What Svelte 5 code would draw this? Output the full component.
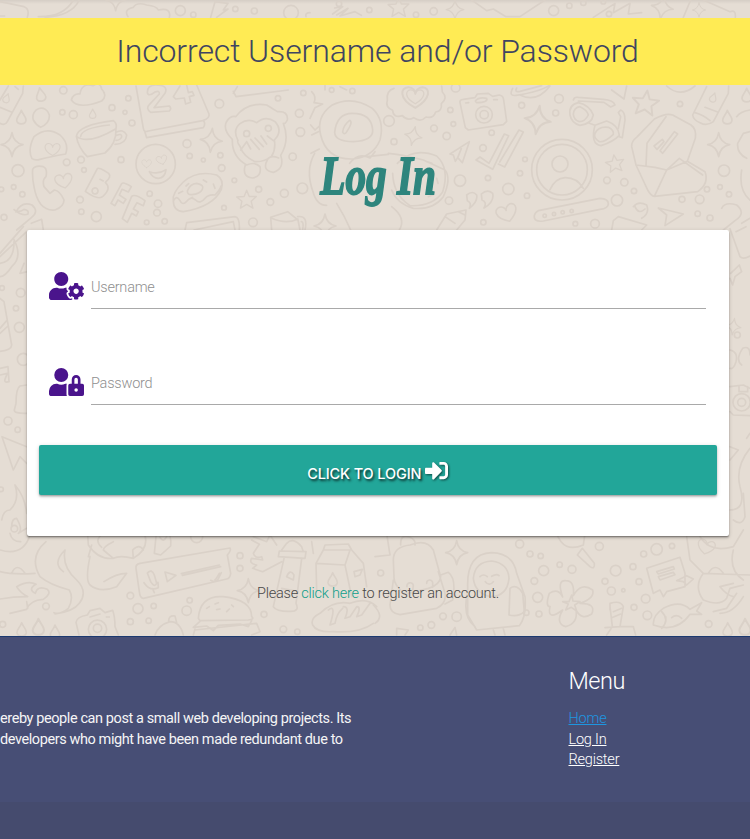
<script>
  const menu = ['Home', 'Log In', 'Register'];
  const star4 = 'M0-36Q5-5 33 0Q5 5 0 36Q-5 5-33 0Q-5-5 0-36Z';
  const star5 = 'M0-32L9-10L34-10L16 7L22 31L0 18L-22 31L-17 7L-35-8L-9-10Z';
  const heart = 'M0 24C-45 0-36-28-17-28C-6-28 0-18 0-12C0-18 8-28 18-28C38-26 40 0 0 24Z';
  const drop = 'M0-20C-4-6-15 0-14 10C-12 24 12 24 14 10C15 0 4-8 0-20Z';
  const envelope = 'M2142 440Q2140 425 2159 410L2210 357Q2245 338 2265 345L2320 375Q2337 387 2333 415L2309 484L2362 515Q2375 550 2340 575L2210 589Q2200 588 2190 570L2155 495ZM2155 495L2212 502L2247 510M2309 484L2247 510M2185 497L2188 430L2245 350M2210 589L2247 510L2285 475L2355 525M2209 438L2234 418L2239 425L2218 448ZM2227 452L2270 395L2280 402L2235 460Z';

  // Small rings scattered between the doodles: x, y, radius
  const rings = [
    [541,32,15],[580,44,8],[706,27,8],[763,33,9],[873,38,22],[1017,11,8],[1108,30,8],
    [190,271,11],[187,337,8],[220,344,12],[336,323,9],[385,295,8],[375,337,6],[396,369,9],[658,311,13],
    [561,431,12],[569,468,8],[610,480,6],[661,466,8],[665,504,10],[878,470,11],[898,340,12],[834,295,8],[901,396,13],[910,279,8],
    [995,270,7],[1057,273,8],[54,512,18],[200,487,10],[243,479,10],[252,510,7],[363,479,9],[4,568,7],[41,561,7],[67,583,8],
    [240,599,10],[244,635,8],[289,650,15],[449,581,8],[474,611,11],[471,638,10],[440,667,7],[494,664,8],[703,541,7],[776,568,9],
    [853,580,12],[907,565,16],[811,606,10],[672,623,7],[759,667,13],[12,652,9],
    [1301,34,11],[1248,44,8],[1661,32,15],[1708,17,8],[1750,8,8],[1810,5,7],[1827,42,8],[1367,263,13],[1677,296,13],[1565,316,9],
    [1667,339,9],[1351,330,8],[1167,363,16],[1302,385,10],[1340,408,11],[1360,372,7],[1475,398,8],[1449,444,10],[1182,425,9],
    [1575,478,7],[1560,520,8],[1464,534,8],[1380,542,17],[1525,567,17],[1581,587,8],[1347,602,11],[1450,667,8],[1821,541,10],
    [1873,547,11],[1851,601,17],[1902,573,8],[2040,312,8],[2172,512,17],[2121,568,8],[2099,598,13],[2046,598,9],[2160,561,7],
    [2187,583,8],[2093,641,8],[2130,654,9],[1785,671,13],[1726,671,7],
    [720,1667,9],[720,1705,9],[391,1787,10],[414,1826,15],[461,1818,8],[391,1865,9],[446,1862,8],[569,1801,8],[560,1832,14],
    [792,1843,9],[850,1888,10],[892,1895,8],[138,1819,10],[8,1873,9],[590,1610,18],[1559,1632,12],[1590,1662,9],[1622,1668,8],
    [1142,1719,9],[1631,1712,15],[1679,1694,8],[1716,1708,12],[1603,1743,10],[1613,1792,15],[1617,1842,9],[1579,1838,8],
    [1798,1639,12],[1847,1712,16],[1815,1744,9],[1899,1700,9],[1931,1662,9],[1970,1648,17],[2016,1638,8],[1917,1745,9],
    [1834,1773,12],[1870,1771,5],[1937,1796,13],[1902,1822,9],[1942,1846,13],[1329,1849,10],[1370,1850,14],[1294,1875,10],
    [1261,1883,8],[2126,1872,10],[6,864,7],[62,878,13],[48,925,8],[58,982,15],[70,1078,18],[24,1263,12],[53,1289,8],[3,1468,7],[43,1586,10],
    [2212,1005,9],[2225,1207,26],[2225,1207,12]
  ];

  // Repeated motifs: shape, transform
  const stamps = [
    [star4,'translate(347 0) scale(.9)'],[star4,'translate(36 434)'],[star4,'translate(634 421) rotate(5)'],[star4,'translate(975 678)'],
    [star4,'translate(1365 29) scale(.8)'],[star4,'translate(1240 408) scale(.8) rotate(12)'],[star4,'translate(1613 360) scale(1.2) rotate(8)'],
    [star4,'translate(1987 22) rotate(10)'],[star4,'translate(2097 30) scale(.6)'],[star4,'translate(2156 434)'],[star4,'translate(745 1772)'],
    [star4,'translate(1370 1658)'],[star4,'translate(2200 980) scale(.7) rotate(8)'],
    [star5,'translate(740 598) scale(.85)'],[star5,'translate(1196 21) scale(.9)'],[star5,'translate(1937 308) scale(1.15) rotate(8)'],[star5,'translate(1845 490) scale(.8) rotate(-8)'],
    [heart,'translate(192 545) scale(.8) rotate(-10)'],[heart,'translate(1246 295) scale(1.2)'],[heart,'translate(1246 292) scale(.8)'],[heart,'translate(1522 642) scale(.95) rotate(-18)'],[heart,'translate(2118 1643) scale(.8) rotate(15)'],
    [heart,'translate(158 450) scale(.7)'],[heart,'translate(440 492) scale(.45)'],[heart,'translate(486 481) scale(.5) rotate(-15)'],
    [drop,'translate(122 283) rotate(-10)'],[drop,'translate(64 351)'],[drop,'translate(278 341) scale(.7)'],[drop,'translate(20 294) scale(.7) rotate(20)'],
    [drop,'translate(2182 351)'],[drop,'translate(2140 292) scale(.7) rotate(20)'],[drop,'translate(2240 285)'],[drop,'translate(998 1738)'],
    [drop,'translate(65 1888)'],[drop,'translate(115 1880) scale(1.2)'],[drop,'translate(165 1895)'],[drop,'translate(2183 1888)'],[drop,'translate(2235 1880) scale(1.2)'],
    [envelope,'translate(-247 0)']
  ];

  const doodles = [
    // top strip: card, banana, cloud, bolt, scribble
    'M0 5L72 20Q90 27 82 52M0 48H14M115 50Q190 52 220 0M135 52Q215 48 238 0M384 50Q370 28 400 22Q410 5 440 15Q470 18 475 30Q515 22 508 52M632 52L645 5L684 10L670 30L684 27L650 52M998 42L1028 20L1004 24M1010 45L1044 25L1020 48L1065 35Q1075 42 1084 46M918 50Q915 38 930 38',
    'M1415 0L1460 32L1480 27L1518 50H1560L1635 0M1780 52L1845 10L1840 38L1890 10L1885 42L1925 38M2050 52L2072 0M2110 0L2190 35Q2208 28 2206 52',
    // calendar with its figures
    'M408 258L430 385Q432 398 445 393L608 362Q630 355 627 342L590 255M434 394L440 413L610 383Q618 370 610 362M442 277Q442 255 467 255Q507 255 495 280L462 323L508 318Q516 325 508 333L452 337Q436 325 448 314L478 282Q479 270 465 276Q444 292 442 277ZM540 258L520 290L527 297L553 294L557 312L572 307L568 290L582 286L577 275L565 278L560 255',
    // glue tube, helmet, phone
    'M25 258L0 300M70 258L68 280L22 365Q15 378 0 370M0 322L34 336M45 260L55 268M148 332M148 345A25 27 0 1 0 100 360Q108 375 122 382Q150 370 148 345M96 476Q82 450 102 410Q140 378 180 405Q208 430 197 462Q150 470 120 478Q105 482 96 476M98 508Q105 495 130 500Q143 505 138 530Q126 540 132 560L150 580L163 570Q180 572 192 600Q192 620 165 630Q115 635 102 560Q96 530 98 508Z',
    // cloud and cup
    'M214 300Q220 280 240 282Q245 247 279 257Q300 244 305 267Q324 287 305 303Q235 330 214 300ZM229 409Q235 375 340 362Q352 370 348 386Q350 430 315 459L262 470Q235 443 229 409ZM229 409Q265 435 348 386M242 409Q245 384 328 375M348 397Q370 385 380 405Q378 432 345 433M350 406Q366 399 365 411Q360 421 348 421',
    // smiley, donut, letters and number at the left
    'M408 492A59 59 0 1 0 526 492A59 59 0 1 0 408 492M448 515Q475 525 498 509Q495 534 475 535Q458 535 448 515M520 602Q515 580 550 546Q590 510 650 525Q673 539 664 568Q640 620 550 635Q520 633 520 602M522 600Q530 585 540 602Q547 618 560 604Q572 588 587 600Q600 614 616 594Q626 582 645 585Q660 570 663 558M562 573Q570 551 590 550Q614 555 607 568Q600 582 575 584Q562 585 562 573M536 580L548 574M558 558L566 551M610 540L620 546M640 552L645 565M569 596L578 592',
    'M292 506Q295 500 326 520Q336 530 316 547Q335 565 310 588Q296 603 256 574ZM291 566A9 9 0 1 0 292 567M300 538L310 543M333 610L365 551Q370 545 394 560L385 576L366 568L358 585L378 598L370 610L354 600L345 617ZM367 656L395 589Q405 580 435 602L430 617L411 608L400 627L415 635L409 648L395 640L382 667ZM48 636Q65 602 96 615Q118 634 95 652L50 690M42 629Q68 650 84 642Q88 630 72 628Q55 640 42 629M94 670L125 658L130 690',
    // monkey
    'M697 418Q668 390 679 366Q691 346 707 350Q742 305 800 315Q825 330 832 335Q865 332 862 360Q855 374 850 370Q870 420 842 466Q855 506 820 517Q785 512 802 480Q810 464 836 474M736 495Q725 530 757 534Q786 530 780 500Q765 484 740 495Q695 470 697 418M714 422Q697 390 720 371Q745 353 770 368Q797 345 825 365Q850 392 823 420Q828 448 815 468Q795 486 765 485Q730 470 720 439Q710 425 714 422M740 425L722 450M740 425L752 447M752 418L778 448M765 414L790 440M783 408L800 432M802 408L820 422M731 401A9 9 0 1 0 749 401A9 9 0 1 0 731 401M796 385A9 9 0 1 0 814 385A9 9 0 1 0 796 385',
    // astronaut
    'M962 405Q948 350 995 316Q1055 285 1117 325Q1155 360 1140 420Q1120 470 1060 477Q980 480 962 405ZM1004 397Q1010 340 1057 340Q1115 340 1118 390Q1120 422 1060 425Q1005 425 1004 397M1028 396Q1030 375 1049 361Q1060 366 1041 394Q1033 407 1028 396M935 275Q950 290 942 308L968 312L945 323L930 355M932 375L945 390L957 379M935 405L955 395M933 460L958 447M944 460Q915 510 939 575Q950 616 980 616M1049 490Q1075 455 1110 474L1125 455M1010 610Q1035 650 1052 690M1100 470L1165 463',
    'M1165 460Q1200 462 1270 480L1335 510Q1355 535 1330 590Q1300 630 1240 625Q1190 610 1175 570M1192 490Q1240 440 1310 468Q1350 505 1328 576Q1298 620 1230 617Q1180 585 1178 520M1220 480L1238 474M1280 485L1296 490M1310 535L1314 550M1285 590L1300 584M1175 620Q1220 655 1198 690',
    // badge, camera
    'M1182 265Q1158 272 1162 301Q1155 322 1178 331Q1180 355 1207 347Q1222 364 1241 353Q1262 368 1278 351Q1300 357 1307 336Q1327 334 1324 311Q1345 294 1327 276L1325 258M1380 308Q1378 299 1390 298L1425 293L1432 282L1465 280L1478 289L1498 285Q1510 287 1511 300L1520 364L1510 374L1405 390L1396 383ZM1427 344A25 25 0 1 0 1477 344A25 25 0 1 0 1427 344M1440 344A12 12 0 1 0 1465 344A12 12 0 1 0 1440 344M1426 303Q1436 290 1460 295Q1465 307 1430 308ZM1397 309L1406 308M1481 299H1492',
    // planet, sunglasses
    'M1538 265Q1525 290 1548 286Q1620 275 1648 256M1550 264Q1542 278 1560 274L1625 257M1560 285Q1610 310 1650 258M1720 300Q1722 290 1735 292L1810 298Q1840 300 1845 315L1832 321L1812 307L1735 303M1710 345Q1705 315 1735 308Q1768 315 1780 345Q1775 372 1740 376Q1715 370 1710 345M1720 343Q1722 322 1740 320Q1762 330 1765 345Q1755 365 1738 365Q1722 360 1720 343M1768 370L1785 376Q1770 432 1803 437Q1840 425 1858 406Q1855 375 1820 363L1785 376M1785 400Q1795 378 1825 382Q1842 390 1840 403Q1815 427 1798 425Q1780 415 1785 400M1858 410L1867 413L1875 360Q1875 335 1862 330L1855 338L1862 350L1855 385',
    // profile ring and its lower pill, ticks, plane, quotes, pencil
    'M1595 509A91 91 0 1 0 1777 509A91 91 0 1 0 1595 509M1610 509A76 76 0 1 0 1762 509A76 76 0 1 0 1610 509M1656 492A24 24 0 1 0 1704 492A24 24 0 1 0 1656 492M1650 569Q1665 535 1695 533Q1730 532 1750 565M1615 632L1800 595Q1825 596 1825 611Q1825 625 1800 628L1630 663Q1600 667 1603 647Q1605 636 1615 632M1629 647A5 5 0 1 0 1639 647A5 5 0 1 0 1629 647M1657 642A5 5 0 1 0 1667 642A5 5 0 1 0 1657 642M1683 637A5 5 0 1 0 1693 637A5 5 0 1 0 1683 637M1710 633A5 5 0 1 0 1720 633A5 5 0 1 0 1710 633',
    'M1428 480L1440 471L1467 490L1513 402L1526 407L1478 508ZM1499 486L1557 390L1570 396L1514 501L1495 492M1350 462L1408 425L1387 488L1373 473L1366 484L1360 465ZM1373 473L1384 446M1400 585Q1418 570 1430 585Q1434 605 1408 625Q1416 608 1402 602ZM1444 582Q1462 566 1478 580Q1484 605 1452 624Q1462 606 1446 600ZM1310 690L1340 642L1398 630L1395 660L1370 690M1375 635L1395 645M1335 650L1365 670',
    // glue tube, plane and helmet at the right
    'M2240 475Q2210 460 2213 430L2230 400L2250 395M2210 350Q2220 335 2250 330M2120 260L2078 345Q2080 360 2100 368Q2120 380 2140 365L2185 280L2186 258M2115 322L2153 336M2085 338Q2110 345 2130 362M1835 270L1872 297L1880 258M2000 258Q2040 295 2085 258M1975 624L2050 642L1995 677L2000 645ZM1900 620Q1915 602 1940 615Q1950 640 1925 655M1905 620Q1915 645 1935 627M2165 625Q2175 604 2210 615Q2240 640 2205 662L2170 690M2225 670L2250 655M2225 510Q2215 570 2250 600M1835 690L1840 662L1855 650L1940 675L1925 690',
    // mug and book over the panel
    'M555 690L560 668L705 650Q720 652 718 690M582 690L700 665L705 690M815 690L812 652L863 635L894 660L900 690M815 655Q860 674 894 657M893 650Q925 645 915 690M904 665Q912 664 908 690M700 274L708 290L865 270M1020 260L1040 270M975 255L975 270M712 260L700 280',
    // left edge
    'M0 760L70 680M0 770L80 695M40 715Q70 770 35 800Q15 830 0 830M0 790Q42 785 42 725M72 790L60 820L82 815M0 895L12 905L35 1035Q35 1050 0 1054M0 985L20 962M0 1000L24 978M0 1105L24 1100L27 1145Q10 1150 16 1135L22 1120L0 1125M80 1155L60 1158Q48 1165 48 1210L43 1230Q42 1241 80 1240M80 1340L6 1310L40 1410L60 1370L80 1390M45 1455Q60 1500 30 1530Q10 1530 5 1560M45 1455Q75 1490 80 1540M35 1580Q35 1555 50 1555Q70 1590 55 1600L80 1585',
    // right edge
    'M2190 686L2220 770Q2230 780 2250 768M2192 820L2218 795L2225 815L2205 830L2198 855L2190 835M2208 695L2238 680M2190 1050Q2215 1055 2208 1085Q2200 1110 2190 1105M2225 1095Q2205 1080 2228 1045Q2250 1035 2250 1065M2190 1160L2230 1155L2250 1165M2217 1160V1175H2243V1160M2190 1235L2200 1245L2250 1247M2190 1340L2215 1350L2190 1380M2240 1315L2250 1300M2250 1345Q2205 1400 2220 1460Q2240 1530 2190 1530M2200 1560Q2225 1580 2235 1550L2230 1480',
    // sea monster
    'M0 1650Q70 1670 90 1605M30 1600Q35 1625 62 1625M138 1625Q85 1670 120 1730Q150 1755 208 1770Q222 1795 205 1825Q180 1845 162 1838M195 1650Q185 1700 230 1740Q265 1775 238 1810Q220 1835 165 1842M0 1715Q40 1725 105 1720M35 1720Q50 1685 75 1720M195 1650Q155 1690 190 1715M50 1760Q85 1740 108 1753Q82 1768 106 1780Q112 1755 142 1768Q156 1780 130 1798Q90 1800 80 1828L30 1840M80 1805L83 1825M50 1760Q60 1778 83 1790Q40 1790 0 1797M262 1590L265 1635Q295 1680 340 1675L310 1650Q310 1640 340 1625M340 1675Q360 1665 400 1675Q450 1645 433 1600M270 1670Q255 1740 270 1755Q300 1780 350 1760L380 1720Q350 1720 312 1745M275 1635L265 1670M400 1675L398 1650Q418 1630 430 1650M310 1600Q280 1620 305 1642',
    // ticket and lower camera
    'M408 1705Q406 1693 420 1690L690 1644Q695 1650 682 1665L692 1720Q690 1735 680 1737L430 1795Q420 1795 418 1775ZM442 1719Q455 1705 463 1725L470 1750Q463 1764 452 1745ZM432 1748Q450 1775 475 1763L474 1747M459 1769L463 1778M495 1716L528 1726L502 1745ZM544 1721L658 1695M547 1726L662 1700M632 1741L643 1745L658 1720M645 1739L652 1742L664 1718M237 1905L228 1867Q230 1850 262 1845L270 1832L300 1825L315 1838L338 1831Q345 1850 345 1880L355 1905M265 1888A27 27 0 1 1 320 1888A27 27 0 0 1 265 1888M280 1885A12 12 0 1 0 305 1885A12 12 0 1 0 280 1885M270 1851L300 1842M319 1851H328M470 1590L463 1660L482 1665L512 1638Q515 1605 500 1590M480 1612Q490 1630 500 1610',
    // splash, lighthouse, milk, bread, burger
    'M755 1620L778 1633L760 1660Q765 1677 785 1670L788 1680L755 1675Q745 1690 770 1695L758 1705L788 1715L845 1685M760 1610L800 1625L810 1605L830 1635M845 1650L860 1630Q880 1610 905 1640L910 1655M838 1653L835 1670L915 1675L918 1655ZM852 1675L820 1820Q830 1835 870 1834Q900 1835 888 1810L905 1675M860 1730Q870 1705 882 1725L880 1740ZM845 1765L895 1775M970 1650L975 1635L1045 1632L1055 1650L1090 1690L1100 1760M970 1650L948 1690L950 1770M970 1650H1050L1035 1695L948 1690M1035 1695L1055 1790M935 1625L940 1660M1062 1715L1087 1708L1080 1725L1065 1730ZM938 1875Q930 1855 960 1840Q1000 1800 1050 1810Q1100 1790 1130 1820M985 1830Q1010 1810 990 1875L1005 1870Q1010 1840 1028 1825M1030 1820Q1050 1820 1035 1855L1050 1850L1070 1820Q1085 1820 1070 1850L1085 1845L1110 1810M938 1875Q950 1898 1000 1895Q1080 1900 1120 1870M595 1855Q600 1785 670 1790Q755 1800 755 1850Q765 1858 745 1860L600 1862ZM600 1864L580 1882L620 1878L640 1892L655 1876L720 1872L745 1880L755 1862M585 1890L770 1870L780 1895L755 1905M580 1905L585 1887M465 1905Q475 1875 510 1865Q540 1865 550 1905M506 1865Q505 1845 525 1848L530 1868M620 1825L628 1820M650 1829L660 1827M645 1812L655 1808M680 1835L688 1827M695 1815L700 1820',
    // backpack and penguin
    'M1180 1680Q1180 1640 1230 1635Q1280 1615 1300 1650L1322 1730Q1320 1755 1285 1765L1215 1783Q1180 1755 1182 1730ZM1180 1740L1170 1815Q1170 1840 1200 1844L1310 1825Q1340 1810 1335 1780L1315 1715M1322 1725L1345 1717Q1370 1735 1358 1800L1335 1812M1180 1770L1162 1790M1202 1635Q1200 1600 1230 1612Q1248 1620 1245 1635M1221 1760A9 9 0 1 1 1240 1756L1238 1772M1280 1750A9 9 0 1 1 1298 1748V1762M1125 1670L1170 1665L1160 1600M1403 1760Q1400 1660 1475 1658Q1540 1660 1550 1720L1575 1790Q1580 1850 1558 1877L1430 1890L1403 1845ZM1420 1735Q1425 1685 1475 1683Q1525 1690 1527 1735Q1522 1788 1472 1790Q1425 1780 1420 1735M1440 1730Q1450 1720 1462 1730M1475 1729Q1490 1720 1497 1727M1456 1745Q1468 1760 1480 1745M1530 1765Q1550 1750 1568 1780L1573 1835Q1555 1852 1527 1845ZM1403 1775Q1385 1850 1425 1880M1480 1890L1485 1905M1510 1886L1515 1905M1190 1905L1190 1885L1225 1890L1215 1905M1350 1905L1365 1882L1370 1905M1120 1815Q1155 1850 1125 1870',
    // flower, magnifier, chat, fish
    'M1688 1791Q1670 1740 1697 1742Q1725 1742 1720 1787Q1743 1745 1778 1770Q1785 1795 1740 1810Q1790 1810 1775 1842Q1745 1862 1728 1830Q1735 1870 1697 1880Q1665 1870 1688 1830Q1640 1865 1650 1820Q1635 1820 1648 1780Q1675 1763 1688 1791ZM1715 1785L1719 1803L1740 1805L1724 1815L1730 1833L1714 1822L1697 1830L1705 1812L1688 1805L1707 1805ZM1670 1600Q1690 1660 1750 1635L1755 1600M1732 1665L1747 1645L1783 1690Q1785 1710 1770 1700ZM1940 1705L2040 1672L2055 1720L2055 1760L2000 1775L1990 1790L1980 1770L1960 1780ZM1970 1715L2020 1700L2023 1707L1975 1722ZM1975 1730L2020 1717L2025 1724L1980 1740ZM2030 1742L2060 1727L2080 1737L2060 1755L2050 1745ZM1960 1870Q1960 1845 1990 1825Q2040 1798 2070 1828L2105 1808L2090 1833L2105 1843L2070 1843Q2030 1900 1960 1875ZM1985 1835Q2010 1860 1985 1885M1995 1852L1998 1851M2015 1853Q2030 1840 2045 1855M1830 1830L1830 1810Q1862 1800 1870 1820L1860 1880H1900L1907 1905M1840 1835L1865 1825M1835 1853L1862 1842M1830 1820L1837 1880L1820 1905M1815 1883L1860 1880',
    'M2060 1610L2070 1680L2110 1720L2250 1725M2100 1610Q2130 1660 2200 1640L2230 1590M2200 1650Q2185 1710 2230 1740M2125 1720Q2145 1685 2170 1720M2110 1720Q2080 1760 2110 1800Q2160 1820 2180 1795L2190 1765L2230 1755M2160 1760L2200 1750M2160 1760Q2180 1785 2200 1790M2140 1835L2180 1825L2210 1780M2160 1840Q2200 1840 2230 1790'
  ];
</script>

<div class="page">
  <svg class="wallpaper" viewBox="0 0 2250 2517" aria-hidden="true">
    {#each rings as [x, y, r]}<circle cx={x} cy={y} r={r} />{/each}
    {#each stamps as [d, t]}<path {d} transform={t} />{/each}
    {#each doodles as d}<path {d} />{/each}
  </svg>

  <div class="alert"><h4>Incorrect Username and/or Password</h4></div>

  <main>
    <h1><span>Log In</span></h1>
    <form class="card" onsubmit={(e) => e.preventDefault()}>
      <label class="field">
        <svg viewBox="0 0 640 512" aria-hidden="true"><path d="M610.5 373.3c2.6-14.1 2.6-28.5 0-42.6l25.8-14.9c3-1.7 4.3-5.2 3.3-8.5-6.7-21.6-18.2-41.2-33.2-57.4-2.3-2.5-6-3.1-9-1.4l-25.8 14.9c-10.9-9.3-23.4-16.5-36.9-21.3v-29.8c0-3.4-2.4-6.4-5.7-7.1-22.3-5-45-4.8-66.2 0-3.3.7-5.7 3.7-5.7 7.1v29.8c-13.5 4.8-26 12-36.9 21.3l-25.8-14.9c-2.9-1.7-6.7-1.1-9 1.4-15 16.2-26.5 35.8-33.2 57.4-1 3.3.4 6.8 3.3 8.5l25.8 14.9c-2.6 14.1-2.6 28.5 0 42.6l-25.8 14.9c-3 1.7-4.3 5.2-3.3 8.5 6.7 21.6 18.2 41.1 33.2 57.4 2.3 2.5 6 3.1 9 1.4l25.8-14.9c10.9 9.3 23.4 16.5 36.9 21.3v29.8c0 3.4 2.4 6.4 5.7 7.1 22.3 5 45 4.8 66.2 0 3.3-.7 5.7-3.7 5.7-7.1v-29.8c13.5-4.8 26-12 36.9-21.3l25.8 14.9c2.9 1.7 6.7 1.1 9-1.4 15-16.2 26.5-35.8 33.2-57.4 1-3.3-.4-6.8-3.3-8.5l-25.8-14.9zM496 400.5c-26.8 0-48.5-21.8-48.5-48.5s21.8-48.5 48.5-48.5 48.5 21.8 48.5 48.5-21.7 48.5-48.5 48.5zM224 256c70.7 0 128-57.3 128-128S294.7 0 224 0 96 57.3 96 128s57.3 128 128 128zm201.2 226.5c-2.3-1.2-4.6-2.6-6.8-3.9l-7.9 4.6c-6 3.4-12.8 5.3-19.6 5.3-10.9 0-21.4-4.6-28.9-12.6-18.3-19.8-32.3-43.9-40.2-69.6-5.5-17.7 1.9-36.4 17.9-45.7l7.9-4.6c-.1-2.6-.1-5.2 0-7.8l-7.9-4.6c-16-9.2-23.4-28-17.9-45.7.9-2.9 2.2-5.8 3.2-8.7-3.8-.3-7.5-1.2-11.4-1.2h-16.7c-22.2 10.2-46.9 16-72.9 16s-50.6-5.8-72.9-16h-16.7C60.2 288 0 348.2 0 422.4V464c0 26.5 21.5 48 48 48h352c10.1 0 19.5-3.2 27.2-8.5-1.2-3.8-2-7.7-2-11.8v-9.2z" /></svg>
        <input type="text" placeholder="Username" />
      </label>
      <label class="field">
        <svg viewBox="0 0 640 512" aria-hidden="true"><path d="M224 256A128 128 0 1 0 96 128a128 128 0 0 0 128 128zm96 64a63.08 63.08 0 0 1 8.1-30.5c-4.8-.5-9.5-1.5-14.5-1.5h-16.7a174.08 174.08 0 0 1-145.8 0h-16.7A134.43 134.43 0 0 0 0 422.4V464a48 48 0 0 0 48 48h280.9a63.54 63.54 0 0 1-8.9-32zm288-32h-32v-80a80 80 0 0 0-160 0v80h-32a32 32 0 0 0-32 32v160a32 32 0 0 0 32 32h224a32 32 0 0 0 32-32V320a32 32 0 0 0-32-32zM496 432a32 32 0 1 1 32-32 32 32 0 0 1-32 32zm32-144h-64v-80a32 32 0 0 1 64 0z" /></svg>
        <input type="password" placeholder="Password" />
      </label>
      <button type="submit">
        <span>CLICK TO LOGIN</span>
        <svg viewBox="0 0 512 512" aria-hidden="true"><path d="M416 448h-84c-6.6 0-12-5.4-12-12v-40c0-6.6 5.4-12 12-12h84c17.7 0 32-14.3 32-32V160c0-17.7-14.3-32-32-32h-84c-6.6 0-12-5.4-12-12V76c0-6.6 5.4-12 12-12h84c53 0 96 43 96 96v192c0 53-43 96-96 96zm-47-201L201 79c-15-15-41-4.5-41 17v96H24c-13.3 0-24 10.7-24 24v96c0 13.3 10.7 24 24 24h136v96c0 21.5 26 32 41 17l168-168c9.3-9.4 9.3-24.6 0-34z" /></svg>
      </button>
    </form>
    <p class="register">Please <a href="#register">click here</a> to register an account.</p>
  </main>

  <footer>
    <div class="about">
      <div>ereby people can post a small web developing projects. Its</div>
      <div>developers who might have been made redundant due to</div>
    </div>
    <nav>
      <h5>Menu</h5>
      {#each menu as item, i}<a href="#{item}" class:current={i === 0}>{item}</a>{/each}
    </nav>
    <div class="copyright"></div>
  </footer>
</div>

<style>
  :global(body) { margin: 0; overflow: hidden; }
  .page {
    position: relative;
    display: flex;
    flex-direction: column;
    width: 750px;
    height: 839px;
    overflow: hidden;
    background: #e5ddd4;
    font-family: Roboto, "Liberation Sans", sans-serif;
    font-weight: 300;
    font-size: 14.5px;
    color: #484848;
  }
  .page::before {
    content: "";
    position: absolute;
    inset: 0 0 auto;
    height: 4px;
    background: linear-gradient(rgba(0, 0, 0, .07), transparent);
  }
  .wallpaper {
    position: absolute;
    inset: 0;
    width: 750px;
    height: 839px;
    fill: none;
    stroke: #dad1c8;
    stroke-width: 5;
    stroke-linecap: round;
    stroke-linejoin: round;
  }
  .alert, main, footer { position: relative; }
  .alert {
    flex: none;
    box-sizing: border-box;
    height: 67px;
    margin-top: 17.5px;
    padding-left: 5px;
    background: #ffeb54;
    text-align: center;
  }
  h4 { margin: 0; font-size: 32px; line-height: 67px; font-weight: 300; letter-spacing: -.11px; color: #404561; }
  main {
    flex: none;
    display: flex;
    flex-direction: column;
    height: 551.5px;
    padding: 0 21px 0 27px;
    box-sizing: border-box;
  }
  h1 {
    display: flex;
    justify-content: center;
    margin: 0;
    height: 145px;
    padding-top: 59px;
    box-sizing: border-box;
    font: italic bold 55px/64px "Liberation Serif", serif;
    color: #2e857d;
    -webkit-text-stroke: 1.8px #2e857d;
    white-space: nowrap;
  }
  h1 span { transform: scaleX(.75); }
  .card {
    display: flex;
    flex-direction: column;
    height: 306.5px;
    box-sizing: border-box;
    padding: 26.5px 12.5px 0 12px;
    border-radius: 2px;
    background: #fff;
    box-shadow: 0 2px 2px rgba(0, 0, 0, .18), 0 1px 4px rgba(0, 0, 0, .16), 0 1px 1px rgba(0, 0, 0, .25);
  }
  .field {
    display: flex;
    align-items: flex-start;
    height: 96.3px;
    padding: 0 11px 0 10.4px;
  }
  .field svg { width: 35px; height: 28px; margin: 16px 6.6px 0 0; fill: #4a148c; }
  input {
    flex: 1;
    min-width: 0;
    height: 52.5px;
    padding: 11px 0 0;
    box-sizing: border-box;
    border: 0;
    border-bottom: 1px solid #a9a9a9;
    outline: 0;
    background: none;
    font: 300 14.5px Roboto, sans-serif;
    letter-spacing: -.22px;
    color: #515151;
  }
  input::placeholder { color: #8f8f8f; opacity: 1; }
  button {
    display: flex;
    align-items: center;
    justify-content: center;
    gap: 4px;
    flex: none;
    height: 50px;
    margin: -3.6px 0 0;
    padding: 0;
    border: 0;
    border-radius: 2px;
    background: #22a699;
    color: #fff;
    font: 500 14.5px Inter, sans-serif;
    letter-spacing: -.13px;
    box-shadow: 0 2px 2px rgba(0, 0, 0, .16), 0 1px 4px rgba(0, 0, 0, .16), 0 1px 1px rgba(0, 0, 0, .12);
    text-shadow: 1.5px 1.5px 2.5px rgba(0, 0, 0, .75);
  }
  button span { padding-top: 6px; }
  button svg { width: 23px; height: 23px; fill: #fff; filter: drop-shadow(1.5px 1.5px 1.2px rgba(0, 0, 0, .55)); }
  .register { margin: 47px 0 0; text-align: center; line-height: 22px; letter-spacing: -.22px; }
  .register a { color: #0f9d8a; text-decoration: none; }
  footer {
    flex: 1;
    display: flex;
    background: #474e75;
    border-top: 1px solid #1c3970;
    color: #f5f5f5;
    font-weight: 400;
    line-height: 20.5px;
  }
  .about {
    flex: none;
    box-sizing: border-box;
    width: 568.5px;
    padding-top: 72px;
    letter-spacing: -.41px;
    white-space: nowrap;
  }
  nav { display: flex; flex-direction: column; align-items: flex-start; padding-top: 28px; letter-spacing: -.2px; }
  h5 { margin: 0 0 12px; font-size: 23.5px; line-height: 32px; font-weight: 300; letter-spacing: -.5px; color: #fff; }
  nav a { color: #fff; font-weight: 300; text-decoration: underline; }
  nav a.current { color: #1e96e0; }
  .copyright { position: absolute; inset: auto 0 0; height: 37px; background: #454b6e; }
</style>
